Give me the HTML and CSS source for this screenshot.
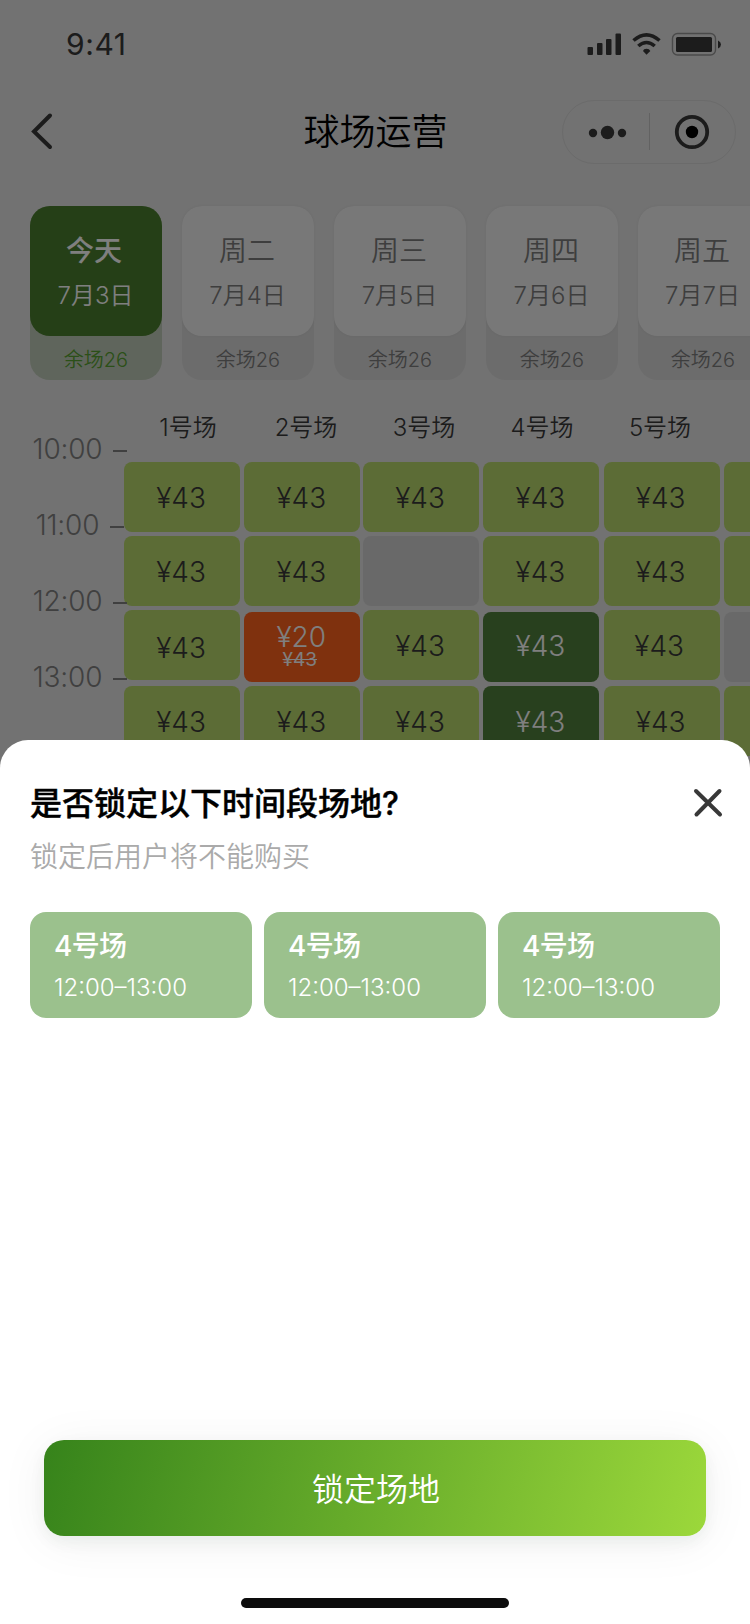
FILE: index.html
```html
<!DOCTYPE html>
<html lang="zh-CN">
<head>
    <meta charset="UTF-8">
    <meta name="viewport" content="width=device-width, initial-scale=1.0">
    <title>球场运营</title>
    <link rel="stylesheet" href="styles.css">
</head>
<body>
    <div class="page">
        <div class="status-bar">
            <span class="time">9:41</span>
            <svg class="status-icons" width="136" height="26" viewBox="0 0 136 26">
                <g fill="#383838">
                    <rect x="0.5" y="15" width="5.5" height="8" rx="1"/>
                    <rect x="10" y="11" width="5.5" height="12" rx="1"/>
                    <rect x="19" y="7" width="5.5" height="16" rx="1"/>
                    <rect x="28.5" y="1.5" width="5.5" height="21.5" rx="1"/>
                    <path d="M59.5 22.8 L56 19 Q56.5 16.8 59.5 16.8 Q62.5 16.8 63.3 19 Z"/>
                    <rect x="89" y="5" width="36" height="15" rx="1.5"/>
                    <path d="M131 8.5 Q134 10 134 12.5 Q134 15 131 16.5 Z"/>
                </g>
                <path d="M46.5 8.5 Q59.5 -2.8 72.5 8.5" fill="none" stroke="#383838" stroke-width="3.6"/>
                <path d="M51.3 14 Q59.5 7 67.7 14" fill="none" stroke="#383838" stroke-width="3.6"/>
                <rect x="85.5" y="1.5" width="43" height="21.5" rx="5" fill="none" stroke="#959595" stroke-width="1.4"/>
            </svg>
        </div>
        <div class="nav-bar">
            <svg class="back" width="24" height="40" viewBox="0 0 24 40">
                <path d="M20 3.5 L4 19.5 L20 35" fill="none" stroke="#383838" stroke-width="4" stroke-linecap="round"/>
            </svg>
            <h1>球场运营</h1>
            <div class="capsule">
                <svg width="172" height="62" viewBox="0 0 172 62">
                    <g fill="#383838">
                        <circle cx="30" cy="32" r="4.2"/>
                        <circle cx="44.5" cy="31.5" r="6.7"/>
                        <circle cx="59" cy="32" r="4.2"/>
                    </g>
                    <path d="M86.5 12 V49" stroke="#c4c4c4" stroke-width="1"/>
                    <circle cx="129" cy="31" r="15.2" fill="none" stroke="#383838" stroke-width="3.8"/>
                    <circle cx="129" cy="31" r="6.2" fill="#000"/>
                </svg>
            </div>
        </div>

        <div class="dates">
            <div class="date active">
                <div class="day"><b>今天</b><span>7月3日</span></div>
                <p>余场26</p>
            </div>
            <div class="date">
                <div class="day"><b>周二</b><span>7月4日</span></div>
                <p>余场26</p>
            </div>
            <div class="date">
                <div class="day"><b>周三</b><span>7月5日</span></div>
                <p>余场26</p>
            </div>
            <div class="date">
                <div class="day"><b>周四</b><span>7月6日</span></div>
                <p>余场26</p>
            </div>
            <div class="date last">
                <div class="day"><b>周五</b><span>7月7日</span></div>
                <p>余场26</p>
            </div>
        </div>

        <div class="schedule">
            <div class="hours">
                <div class="hour">10:00<i></i></div>
                <div class="hour">11:00<i></i></div>
                <div class="hour">12:00<i></i></div>
                <div class="hour">13:00<i></i></div>
            </div>
            <div class="courts">
                <div class="court-names">
                    <span>1号场</span>
                    <span>2号场</span>
                    <span>3号场</span>
                    <span>4号场</span>
                    <span>5号场</span>
                </div>
                <div class="columns">
                    <div class="column">
                        <div class="cell">¥43</div>
                        <div class="cell">¥43</div>
                        <div class="cell low-text">¥43</div>
                        <div class="cell">¥43</div>
                    </div>
                    <div class="column">
                        <div class="cell">¥43</div>
                        <div class="cell">¥43</div>
                        <div class="cell sale">¥20<del>¥43</del></div>
                        <div class="cell">¥43</div>
                    </div>
                    <div class="column third">
                        <div class="cell">¥43</div>
                        <div class="cell sold"></div>
                        <div class="cell">¥43</div>
                        <div class="cell">¥43</div>
                    </div>
                    <div class="column">
                        <div class="cell">¥43</div>
                        <div class="cell">¥43</div>
                        <div class="cell selected shifted">¥43</div>
                        <div class="cell selected">¥43</div>
                    </div>
                    <div class="column">
                        <div class="cell">¥43</div>
                        <div class="cell">¥43</div>
                        <div class="cell left-text">¥43</div>
                        <div class="cell">¥43</div>
                    </div>
                    <div class="column">
                        <div class="cell"></div>
                        <div class="cell"></div>
                        <div class="cell sold shifted"></div>
                        <div class="cell"></div>
                    </div>
                </div>
            </div>
        </div>
    </div>

    <div class="mask"></div>

    <div class="sheet">
        <div class="sheet-head">
            <h2>是否锁定以下时间段场地?</h2>
            <svg class="close" width="32" height="32" viewBox="0 0 32 32">
                <path d="M4 4 L28 27.5 M27.5 4 L4.5 27.5" stroke="#383838" stroke-width="4" stroke-linecap="round"/>
            </svg>
        </div>
        <p class="tip">锁定后用户将不能购买</p>
        <div class="slots">
            <div class="slot"><b>4号场</b><span>12:00–13:00</span></div>
            <div class="slot"><b>4号场</b><span>12:00–13:00</span></div>
            <div class="slot"><b>4号场</b><span>12:00–13:00</span></div>
        </div>
        <button class="lock-btn">锁定场地</button>
        <div class="home-bar"></div>
    </div>
</body>
</html>
```
FILE: styles.css
```css
* {
    box-sizing: border-box;
}
body {
    margin: 0;
    position: relative;
    width: 750px;
    height: 1624px;
    overflow: hidden;
    font-family: Inter, "Noto Sans CJK SC", sans-serif;
    font-weight: 350;
    color: #383838;
}
h1, h2, p {
    margin: 0;
}
b {
    font-weight: 350;
}
.page {
    height: 1624px;
    background: #e4e4e4;
    overflow: hidden;
}

/* status bar */
.status-bar {
    display: flex;
    justify-content: space-between;
    height: 88px;
    padding: 32px 27px 0 66px;
}
.time {
    font-size: 30px;
    font-weight: 430;
    line-height: 25px;
    letter-spacing: 0.6px;
}
.status-icons {
    display: block;
}

/* title bar */
.nav-bar {
    display: grid;
    grid-template-columns: 174px 1fr 174px;
    align-items: center;
    height: 88px;
    padding: 0 14px 0 30px;
}
.nav-bar h1 {
    font-size: 36px;
    font-weight: 350;
    line-height: 50px;
    color: #000;
    padding-right: 15px;
    text-align: center;
}
.capsule {
    width: 174px;
    height: 64px;
    border: 1px solid #d6d6d6;
    border-radius: 32px;
}
.capsule svg {
    display: block;
}

/* date cards */
.dates {
    display: flex;
    gap: 20px;
    padding: 30px 0 0 30px;
}
.date {
    flex: none;
    width: 132px;
    height: 174px;
    border-radius: 20px;
    background: #d8d8d8;
    color: #7c7c7c;
    text-align: center;
}
.day {
    display: flex;
    flex-direction: column;
    height: 130px;
    padding-top: 25px;
    border-radius: 20px;
    background: #f1f1f1;
    box-shadow: 0 0 3px rgba(0, 0, 0, 0.05);
}
.day b {
    font-size: 28px;
    line-height: 40px;
    padding-right: 2px;
}
.day span {
    font-size: 24px;
    line-height: 34px;
    margin-top: 8px;
    padding-right: 1px;
}
.date p {
    font-size: 20px;
    line-height: 28px;
    padding-top: 10px;
}
.date.active {
    background: #bfcab8;
    color: #56a030;
}
.active .day {
    background: #4a7e2e;
    color: #fff;
    box-shadow: none;
}
.active .day b {
    font-weight: 500;
    padding-right: 4px;
}
.date.last .day, .date.last p {
    padding-right: 2px;
}

/* schedule */
.schedule {
    display: flex;
    padding-top: 32px;
}
.hours {
    flex: none;
    width: 124px;
    padding-top: 17px;
}
.hour {
    display: flex;
    justify-content: center;
    align-items: center;
    width: 160px;
    height: 40px;
    margin-bottom: 36px;
    font-size: 28px;
    font-weight: 330;
    letter-spacing: -0.2px;
    color: #808080;
}
.hour i {
    position: relative;
    z-index: 1;
    width: 14px;
    height: 2px;
    margin: 4px 0 0 11px;
    background: #808080;
}
.courts {
    flex: none;
}
.court-names {
    display: flex;
    height: 50px;
    padding: 0 0 18px 5px;
    font-size: 24px;
    line-height: 32px;
}
.court-names span {
    width: 118px;
    text-align: center;
}
.columns {
    display: flex;
    gap: 4.3px;
}
.column {
    display: flex;
    flex-direction: column;
}
.third {
    margin-left: -1.5px;
}
.cell {
    display: flex;
    flex-direction: column;
    align-items: center;
    justify-content: center;
    flex: none;
    width: 116px;
    height: 70px;
    margin-bottom: 4px;
    padding: 1px 2px 0 0;
    border-radius: 8px;
    background: #b8d86c;
    font-size: 28px;
    line-height: 34px;
}
.cell:nth-child(3) {
    margin-bottom: 6px;
}
.cell.low-text {
    padding-top: 5px;
}
.cell.left-text {
    padding-right: 5px;
}
.cell.sale, .cell.shifted {
    margin: 2px 0 4px;
    padding-top: 0;
    padding-bottom: 2px;
}
.cell.sale {
    background: #fe621c;
    color: #fff;
    line-height: 28px;
    padding: 0 2px 3px 0;
}
.cell.sale del {
    font-size: 19px;
    font-weight: 420;
    line-height: 18px;
    margin-right: 3px;
}
.cell.selected {
    background: #50803c;
    color: #fff;
}
.cell.sold {
    background: #d3d3d3;
}

.mask {
    position: absolute;
    inset: 0;
    z-index: 2;
    background: rgba(0, 0, 0, 0.5);
}

/* bottom sheet */
.sheet {
    position: absolute;
    left: 0;
    right: 0;
    bottom: 0;
    z-index: 3;
    display: flex;
    flex-direction: column;
    height: 884px;
    padding: 41px 30px 16px;
    border-radius: 28px 28px 0 0;
    background: #fff;
}
.sheet-head {
    display: flex;
    justify-content: space-between;
    height: 46px;
}
.sheet-head h2 {
    font-size: 32px;
    font-weight: 500;
    line-height: 46px;
    color: #000;
    -webkit-text-stroke: 0.4px #000;
}
.close {
    margin: 6px -4px 0 0;
}
.tip {
    margin-top: 10px;
    font-size: 28px;
    line-height: 40px;
    color: #aaa;
}
.slots {
    display: flex;
    gap: 12px;
    margin-top: 35px;
}
.slot {
    display: flex;
    flex-direction: column;
    width: 222px;
    height: 106px;
    padding: 15px 24px 0;
    border-radius: 16px;
    background: #9bc18d;
    color: #fff;
}
.slot b {
    font-size: 28px;
    font-weight: 500;
    line-height: 39px;
    letter-spacing: -0.7px;
}
.slot span {
    font-size: 24px;
    line-height: 34px;
    margin-top: 5px;
}
.lock-btn {
    height: 96px;
    margin: auto 14px 0;
    padding: 0 0 2px 2px;
    border: none;
    border-radius: 20px;
    background: linear-gradient(105deg, #36831b, #9cd83b);
    box-shadow: 0 6px 50px rgba(0, 0, 0, 0.06), 0 6px 16px rgba(20, 60, 40, 0.06);
    font-family: inherit;
    font-size: 32px;
    font-weight: 350;
    color: #fff;
}
.home-bar {
    width: 268px;
    height: 10px;
    margin: 62px auto 0;
    border-radius: 5px;
    background: #0c0c0c;
}
```
